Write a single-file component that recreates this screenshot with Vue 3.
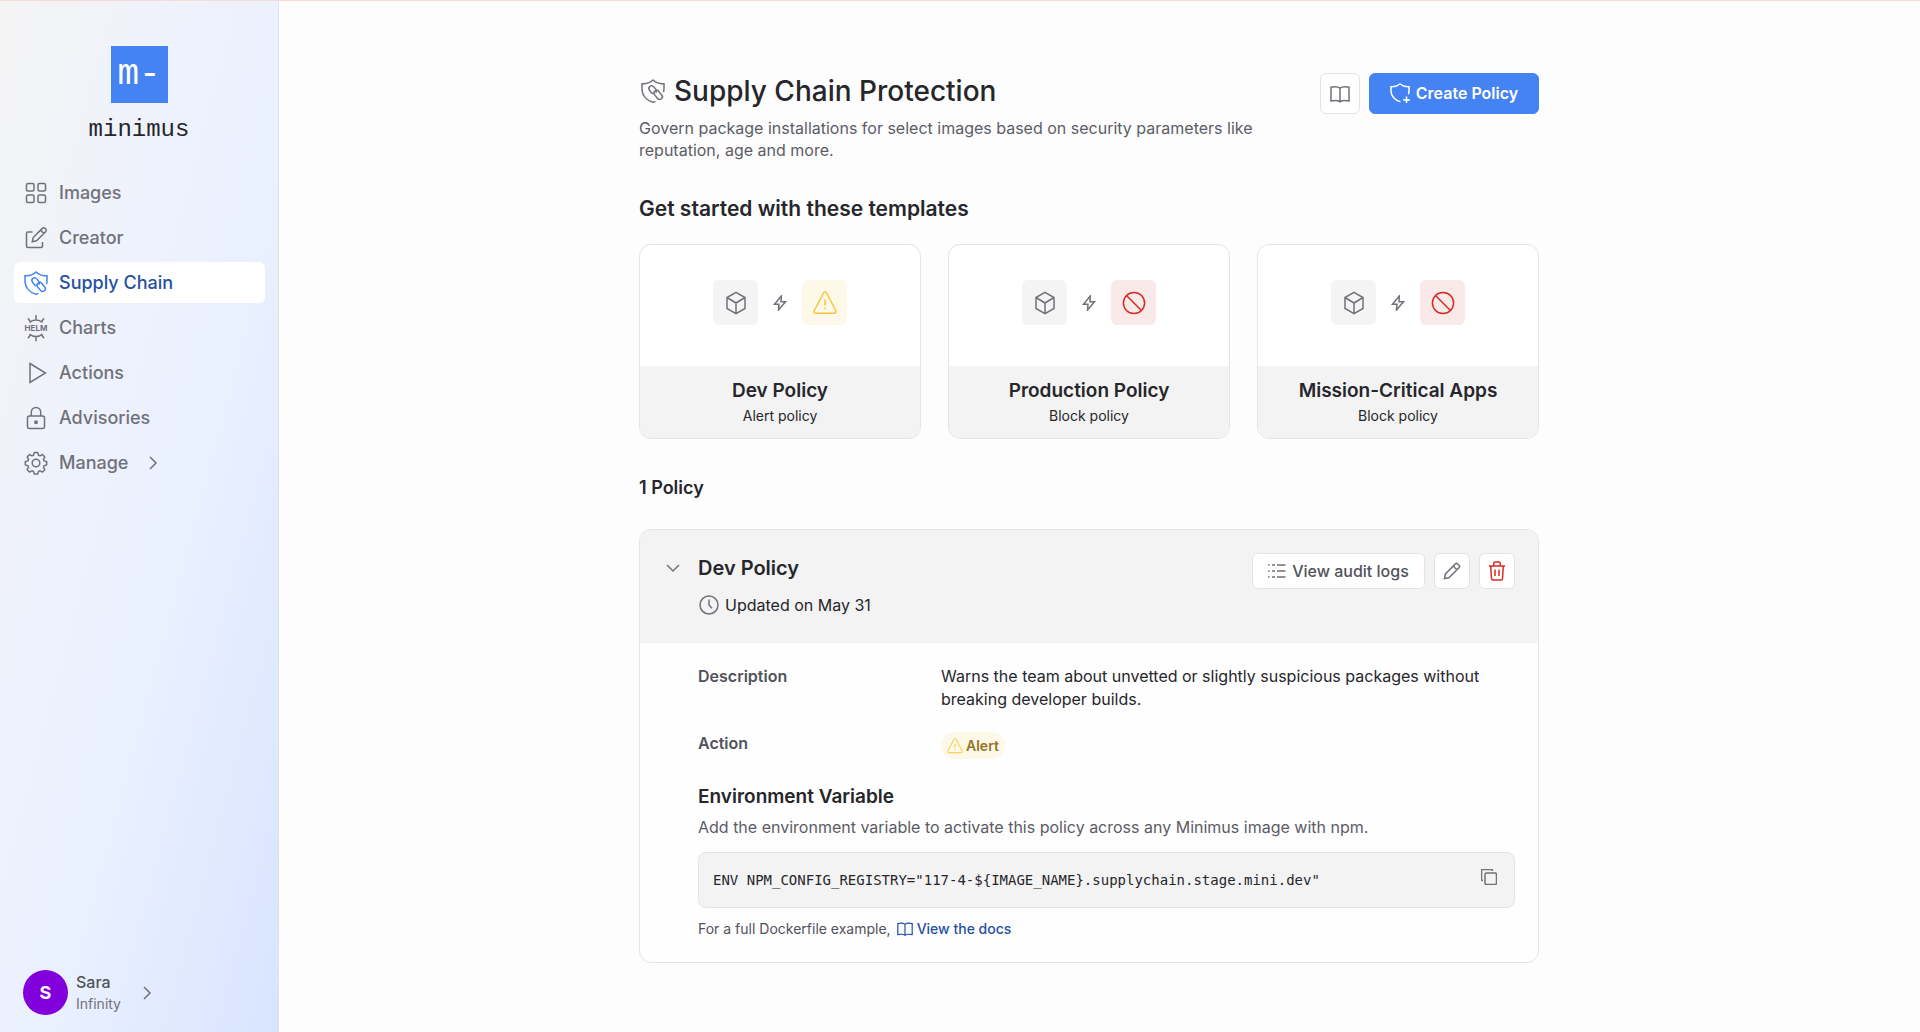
<script setup>
const navItems = [
  { label: 'Images', icon: 'grid' },
  { label: 'Creator', icon: 'compose' },
  { label: 'Supply Chain', icon: 'shield-link', active: true },
  { label: 'Charts', icon: 'helm' },
  { label: 'Actions', icon: 'play' },
  { label: 'Advisories', icon: 'lock' },
  { label: 'Manage', icon: 'gear', expandable: true },
]

const templates = [
  { title: 'Dev Policy', kind: 'Alert policy', icon: 'alert', tone: 'warn' },
  { title: 'Production Policy', kind: 'Block policy', icon: 'block', tone: 'danger' },
  { title: 'Mission-Critical Apps', kind: 'Block policy', icon: 'block', tone: 'danger' },
]

const envLine = 'ENV NPM_CONFIG_REGISTRY="117-4-${IMAGE_NAME}.supplychain.stage.mini.dev"'
</script>

<template>
  <div class="app">
    <svg class="sprite" aria-hidden="true">
      <symbol id="grid" viewBox="0 0 24 24">
        <rect x="2.500" y="2.500" width="7.500" height="7.500" rx="1.500" />
        <rect x="14" y="2.500" width="7.500" height="7.500" rx="1.500" />
        <rect x="2.500" y="14" width="7.500" height="7.500" rx="1.500" />
        <rect x="14" y="14" width="7.500" height="7.500" rx="1.500" />
      </symbol>
      <symbol id="compose" viewBox="0 0 24 24">
        <path d="M8.500 6H4a1.500 1.500 0 0 0-1.500 1.500V20A1.500 1.500 0 0 0 4 21.500h13a1.500 1.500 0 0 0 1.500-1.500v-4" />
        <path d="M8.300 15.700l.9-4.200L18.300 2.400a2 2 0 0 1 2.900 0l.4.400a2 2 0 0 1 0 2.900L12.500 14.800zM16.600 4.200l3.200 3.200" />
      </symbol>
      <symbol id="shield-link" viewBox="0 0 24 24">
        <path d="M14.500 22.300c-.8.400-1.700.7-2.500.9C5.500 21.500 1 16.500 1 9.500V4.700C5 5 9 3.700 12 1c3 2.700 7 4 11 3.700v4.800c0 1.300-.2 2.500-.5 3.600" />
        <path d="M12.600 14.500c-.8.200-1.600-.1-2.200-.8L8.500 11.200a2.700 2.700 0 0 1 4.300-3.300l2 2.500c.8 1 .8 2.300 0 3.300" />
        <rect x="12.200" y="13.200" width="10" height="5.400" rx="2.700" transform="rotate(50 17.200 15.900)" />
      </symbol>
      <symbol id="helm" viewBox="0 0 24 28">
        <path d="M5.500 8.500a9.500 9.500 0 0 1 13 0M12 5.500V1M6.300 7.500L4 4.300M17.700 7.500L20 4.300M5.500 20a9.500 9.500 0 0 0 13 0M12 22.700v4.500M6.300 21L4 24.200M17.700 21l2.300 3.200" />
      </symbol>
      <symbol id="play" viewBox="0 0 24 24"><path d="M6 2.500L21.500 12 6 21.500z" /></symbol>
      <symbol id="lock" viewBox="0 0 24 24">
        <rect x="3.500" y="10" width="17" height="12.500" rx="2" />
        <path d="M7.300 10V6.200a4.700 4.700 0 0 1 9.400 0V10" />
        <circle cx="12" cy="16.200" r="1.200" fill="currentColor" />
      </symbol>
      <symbol id="gear" viewBox="0 0 24 24">
        <circle cx="12" cy="12" r="3.800" />
        <path d="M10.300 1.500h3.400l.8 2.700 1.500.6 2.500-1.300 2.300 2.400-1.300 2.500.6 1.500 2.600.8v3.200l-2.600.8-.6 1.500 1.300 2.500-2.300 2.400-2.500-1.300-1.500.6-.8 2.600h-3.400l-.8-2.600-1.500-.6-2.500 1.300-2.300-2.400 1.300-2.500-.6-1.500-2.600-.8v-3.200l2.600-.8.6-1.500-1.300-2.500 2.300-2.400L8 4.800l1.500-.6z" stroke-linejoin="round" />
      </symbol>
      <symbol id="chevron-right" viewBox="0 0 16 16"><path d="M5 2L11 8 5 14" /></symbol>
      <symbol id="chevron-down" viewBox="0 0 16 16"><path d="M2 5L8 11 14 5" /></symbol>
      <symbol id="book" viewBox="0 0 20 20">
        <path d="M10 4.200C8 2.600 4 2.600 1 3.200V17c3-.6 7-.6 9 .8 2-1.400 6-1.400 9-.8V3.200c-3-.6-7-.6-9 1zM10 4.200v13.600" />
      </symbol>
      <symbol id="shield-plus" viewBox="0 0 20 20">
        <path d="M10.500 18.800C5 17.500 1 13 1 8V3.800C4.500 4 7.500 3 10 1c2.500 2 5.500 3 9 2.800V8c0 1.200-.2 2.200-.6 3.200" />
        <path d="M16.500 13.500v7M13 17h7" />
      </symbol>
      <symbol id="cube" viewBox="0 0 24 24">
        <path d="M12 1.300L21 6.500v11L12 22.700 3 17.500v-11zM3 6.500L12 12l9-5.500M12 12v10.700" />
      </symbol>
      <symbol id="bolt" viewBox="0 0 16 16"><path d="M9.300 1L2.500 9.200H7L6.500 15l7-8.200H9z" /></symbol>
      <symbol id="alert" viewBox="0 0 24 24">
        <path d="M10.400 2L1.300 19.500A1.800 1.800 0 0 0 2.900 22.200h18.200a1.800 1.800 0 0 0 1.600-2.700L13.600 2a1.800 1.800 0 0 0-3.200 0zM12 8.500v6M12 16.500v1.700" />
      </symbol>
      <symbol id="block" viewBox="0 0 24 24">
        <circle cx="12" cy="12" r="10.600" />
        <path d="M4.500 4.500l15 15" />
      </symbol>
      <symbol id="clock" viewBox="0 0 20 20">
        <circle cx="10" cy="10" r="9" />
        <path d="M10 4.500V10l3 3.300" />
      </symbol>
      <symbol id="list" viewBox="0 0 18 18">
        <path d="M0 3h1.500M4 3h3M9 3h8.500M0 9h1.500M4 9h3M9 9h8.500M0 15h1.500M4 15h3M9 15h8.500" />
      </symbol>
      <symbol id="pencil" viewBox="0 0 18 18">
        <path d="M1.500 16.500l.8-4.300L12.200 2a1.800 1.800 0 0 1 2.500 0l1.300 1.300a1.800 1.800 0 0 1 0 2.500L5.900 15.800zM10.800 3.500c.3 2 1.600 3.400 3.700 3.800" />
      </symbol>
      <symbol id="trash" viewBox="0 0 18 20">
        <path d="M1 5h16M2.700 5l.8 12.500A1.600 1.600 0 0 0 5.100 19h7.800a1.600 1.600 0 0 0 1.600-1.500L15.300 5M5.800 5V2.300A1.200 1.200 0 0 1 7 1h4a1.200 1.200 0 0 1 1.200 1.300V5M7 8.500v6.500M11 8.500v6.500" />
      </symbol>
      <symbol id="copy" viewBox="0 0 16 16">
        <rect x="4" y="4" width="11.500" height="11.500" rx="1.500" />
        <path d="M2 11.500H1.500A1 1 0 0 1 .5 10.500V1.500A1 1 0 0 1 1.500.5h9a1 1 0 0 1 1 1V2" />
      </symbol>
    </svg>

    <aside class="sidebar">
      <div class="brand">
        <div class="brand-mark">m-</div>
        <div class="brand-name">minimus</div>
      </div>
      <nav class="nav">
        <a v-for="item in navItems" :key="item.label" href="#" class="nav-item" :class="{ active: item.active }">
          <svg class="icon nav-icon" :class="{ tall: item.icon === 'helm' }">
            <use :href="'#' + item.icon" />
            <text v-if="item.icon === 'helm'" x="12" y="17" text-anchor="middle" class="helm-text">HELM</text>
          </svg>
          <span>{{ item.label }}</span>
          <svg v-if="item.expandable" class="icon chevron"><use href="#chevron-right" /></svg>
        </a>
      </nav>
      <button type="button" class="account">
        <span class="avatar">S</span>
        <span class="account-text">
          <span class="account-name">Sara</span>
          <span class="account-org">Infinity</span>
        </span>
        <svg class="icon chevron"><use href="#chevron-right" /></svg>
      </button>
    </aside>

    <main class="main">
      <div class="content">
        <header class="page-head">
          <div class="page-intro">
            <h1><svg class="icon nav-icon"><use href="#shield-link" /></svg>Supply Chain Protection</h1>
            <p>Govern package installations for select images based on security parameters like reputation, age and more.</p>
          </div>
          <div class="page-actions">
            <button type="button" class="btn btn-book" aria-label="Documentation"><svg class="icon s20"><use href="#book" /></svg></button>
            <button type="button" class="btn btn-primary"><svg class="icon s20"><use href="#shield-plus" /></svg>Create Policy</button>
          </div>
        </header>

        <h2>Get started with these templates</h2>
        <div class="templates">
          <button v-for="t in templates" :key="t.title" type="button" class="template">
            <span class="template-art">
              <span class="tile"><svg class="icon s24"><use href="#cube" /></svg></span>
              <svg class="icon s16"><use href="#bolt" /></svg>
              <span class="tile" :class="t.tone"><svg class="icon s24"><use :href="'#' + t.icon" /></svg></span>
            </span>
            <span class="template-foot">
              <span class="template-title">{{ t.title }}</span>
              <span class="template-kind">{{ t.kind }}</span>
            </span>
          </button>
        </div>

        <h3 class="count">1 Policy</h3>

        <section class="policy">
          <header class="policy-head">
            <button type="button" class="toggle" aria-label="Collapse"><svg class="icon s16"><use href="#chevron-down" /></svg></button>
            <div class="policy-title">
              <h3>Dev Policy</h3>
              <p><svg class="icon s20"><use href="#clock" /></svg>Updated on May 31</p>
            </div>
            <div class="policy-actions">
              <button type="button" class="btn btn-audit"><svg class="icon s18"><use href="#list" /></svg>View audit logs</button>
              <button type="button" class="btn btn-square" aria-label="Edit"><svg class="icon s18"><use href="#pencil" /></svg></button>
              <button type="button" class="btn btn-square delete" aria-label="Delete"><svg class="icon s20"><use href="#trash" /></svg></button>
            </div>
          </header>
          <div class="policy-body">
            <dl>
              <dt>Description</dt>
              <dd>Warns the team about unvetted or slightly suspicious packages without breaking developer builds.</dd>
              <dt>Action</dt>
              <dd><span class="badge"><svg class="icon s16"><use href="#alert" /></svg>Alert</span></dd>
            </dl>
            <h4>Environment Variable</h4>
            <p class="hint">Add the environment variable to activate this policy across any Minimus image with npm.</p>
            <div class="code">
              <code>{{ envLine }}</code>
              <button type="button" class="copy" aria-label="Copy"><svg class="icon s16"><use href="#copy" /></svg></button>
            </div>
            <p class="docs">For a full Dockerfile example,<a href="#"><svg class="icon s16"><use href="#book" /></svg>View the docs</a></p>
          </div>
        </section>
      </div>
    </main>
  </div>
</template>

<style>
body {
  margin: 0;
  background: #fdfdfd;
}
</style>

<style scoped>
.app {
  display: flex;
  min-height: 100vh;
  box-sizing: border-box;
  border-top: 1px solid #fad9d3;
  font-family: Inter, "Open Sans", sans-serif;
  font-size: 16px;
  color: #26262b;
}
.app * {
  box-sizing: border-box;
}
h1, h2, h3, h4, p, dl, dd {
  margin: 0;
}
button {
  font: inherit;
  color: inherit;
  cursor: pointer;
}
a {
  text-decoration: none;
}
.sprite {
  position: absolute;
  width: 0;
  height: 0;
}
.icon {
  flex: none;
  fill: none;
  stroke: currentColor;
  stroke-width: 1.5;
  color: #71717a;
  overflow: visible;
}
.helm-text {
  fill: currentColor;
  stroke: none;
  font-size: 8px;
  font-weight: 700;
}
.nav-icon,
.s24 { width: 24px; height: 24px; }
.s20 { width: 20px; height: 20px; }
.s18 { width: 18px; height: 18px; }
.s16 { width: 16px; height: 16px; }
.nav-icon.tall { height: 28px; }

.sidebar {
  flex: none;
  display: flex;
  flex-direction: column;
  width: 279px;
  border-right: 1px solid #e0e1e6;
  background: linear-gradient(105deg, #f4f4f4 0%, #eef2fc 35%, #e9f0ff 60%, #d8e4ff 100%);
}
.brand {
  display: flex;
  flex-direction: column;
  align-items: center;
  gap: 11px;
  padding-top: 45px;
  font-family: "Liberation Mono", monospace;
}
.brand-mark {
  width: 57px;
  height: 57px;
  background: #4583f3;
  color: #fff;
  font-size: 36px;
  line-height: 57px;
  text-align: center;
}
.brand-name {
  font-size: 24px;
  line-height: 32px;
  color: #26262b;
}
.nav {
  display: flex;
  flex-direction: column;
  gap: 4px;
  padding: 26px 13px 0 14px;
}
.nav-item {
  display: flex;
  align-items: center;
  gap: 11px;
  height: 41px;
  padding: 0 10px;
  border-radius: 6px;
  font-size: 18px;
  font-weight: 500;
  color: #71717a;
}
.nav-item.active {
  background: #fff;
  color: #2550a0;
}
.nav-item.active .icon {
  color: #4583f3;
}
.nav-item .chevron {
  margin-left: 6px;
}
.chevron {
  width: 16px;
  height: 16px;
}
.account {
  display: flex;
  align-items: center;
  margin-top: auto;
  padding: 0 23px 17px;
  border: 0;
  background: none;
  text-align: left;
}
.avatar {
  display: flex;
  align-items: center;
  justify-content: center;
  width: 45px;
  height: 45px;
  border-radius: 50%;
  background: #8200db;
  color: #fff;
  font-size: 18px;
  font-weight: 700;
}
.account-text {
  display: flex;
  flex-direction: column;
  margin: 0 18px 0 8px;
  line-height: 22px;
}
.account-name {
  font-weight: 500;
  font-size: 16px;
  color: #52525b;
}
.account-org {
  font-size: 14px;
  color: #71717a;
}

.main {
  flex: 1;
  display: flex;
  justify-content: center;
  align-items: flex-start;
  padding: 72px 21px 68px 0;
}
.content {
  width: 100%;
  max-width: 900px;
}
.page-head {
  display: flex;
  justify-content: space-between;
  align-items: flex-start;
}
.page-intro {
  max-width: 640px;
}
h1 {
  display: flex;
  align-items: center;
  gap: 9px;
  padding-left: 2px;
  font-size: 28px;
  line-height: 36px;
  font-weight: 500;
}
.page-intro p {
  margin-top: 8px;
  color: #5c5c66;
  line-height: 22px;
}
.page-actions {
  display: flex;
  gap: 9px;
}
.btn {
  display: flex;
  align-items: center;
  justify-content: center;
  padding: 0;
  border: 1px solid #e4e4e7;
  border-radius: 6px;
  background: #fff;
  font-weight: 500;
}
.btn-book {
  width: 40px;
  height: 41px;
}
.btn-primary {
  gap: 6px;
  width: 170px;
  height: 41px;
  padding-bottom: 2px;
  border-color: #4583f3;
  background: #4583f3;
  color: #fff;
  font-weight: 600;
}
.btn-primary .icon {
  color: #fff;
}
h2 {
  margin-top: 34px;
  font-size: 21px;
  line-height: 28px;
  font-weight: 600;
}
.templates {
  display: grid;
  grid-template-columns: repeat(3, 1fr);
  gap: 27px;
  margin-top: 21px;
}
.template {
  display: flex;
  flex-direction: column;
  height: 195px;
  padding: 0;
  border: 1px solid #e4e4e7;
  border-radius: 12px;
  background: #fff;
  overflow: hidden;
}
.template-art {
  display: flex;
  flex: 1;
  align-items: center;
  justify-content: center;
  gap: 14px;
  width: 100%;
  padding-bottom: 6px;
}
.tile {
  display: flex;
  align-items: center;
  justify-content: center;
  width: 45px;
  height: 45px;
  border-radius: 6px;
  background: #f4f4f4;
}
.tile.warn { background: #fdf8e8; }
.tile.warn .icon { color: #f4c63d; }
.tile.danger { background: #fae9e9; }
.tile.danger .icon { color: #d52b23; }
.template-foot {
  display: flex;
  flex-direction: column;
  justify-content: center;
  width: 100%;
  height: 72px;
  padding-top: 2px;
  background: #f3f3f3;
}
.template-title {
  font-size: 19px;
  line-height: 26px;
  font-weight: 600;
}
.template-kind {
  font-size: 14px;
  line-height: 24px;
}
.count {
  margin-top: 35px;
  font-size: 18px;
  line-height: 28px;
  font-weight: 600;
}
.policy {
  margin-top: 27px;
  border: 1px solid #e4e4e7;
  border-radius: 12px;
  background: #fefefe;
  overflow: hidden;
}
.policy-head {
  display: flex;
  align-items: flex-start;
  height: 113px;
  padding: 23px 23px 0 25px;
  background: #f3f3f3;
}
.toggle {
  display: flex;
  padding: 7px 0;
  margin-right: 17px;
  border: 0;
  background: none;
}
.policy-title {
  flex: 1;
}
.policy-title h3 {
  font-size: 20px;
  line-height: 30px;
  font-weight: 600;
}
.policy-title p {
  display: flex;
  align-items: center;
  gap: 6px;
  margin-top: 10px;
  padding-left: 1px;
  line-height: 24px;
}
.policy-actions {
  display: flex;
  gap: 9px;
}
.btn-audit {
  gap: 6px;
  width: 173px;
  height: 36px;
  color: #52525b;
}
.btn-square {
  width: 36px;
  height: 36px;
}
.delete .icon {
  color: #d52b23;
}
.policy-body {
  padding: 22px 23px 21px 58px;
}
dl {
  display: grid;
  grid-template-columns: 243px 1fr;
  row-gap: 21px;
  line-height: 23px;
}
dt {
  font-weight: 600;
  color: #52525b;
}
.badge {
  display: inline-flex;
  align-items: center;
  gap: 3px;
  height: 27px;
  padding: 0 6px;
  border-radius: 14px;
  background: #fdf8e8;
  color: #957327;
  font-size: 14px;
  font-weight: 600;
}
.badge .icon {
  color: #f4c63d;
}
h4 {
  margin-top: 23px;
  font-size: 19px;
  line-height: 28px;
  font-weight: 600;
}
.hint {
  margin-top: 4px;
  line-height: 24px;
  color: #5c5c66;
}
.code {
  display: flex;
  align-items: flex-start;
  justify-content: space-between;
  margin-top: 13px;
  padding: 16px 17px 16px 14px;
  border: 1px solid #e4e4e7;
  border-radius: 8px;
  background: #f3f3f3;
}
code {
  font-family: "DejaVu Sans Mono", monospace;
  font-size: 14px;
  line-height: 22px;
}
.copy {
  display: flex;
  padding: 0;
  border: 0;
  background: none;
}
.docs {
  display: flex;
  align-items: center;
  gap: 6px;
  margin-top: 9px;
  font-size: 14px;
  line-height: 24px;
  color: #52525b;
}
.docs a {
  display: flex;
  align-items: center;
  gap: 4px;
  font-weight: 500;
  color: #2550a0;
}
.docs .icon {
  color: #2550a0;
}
</style>
